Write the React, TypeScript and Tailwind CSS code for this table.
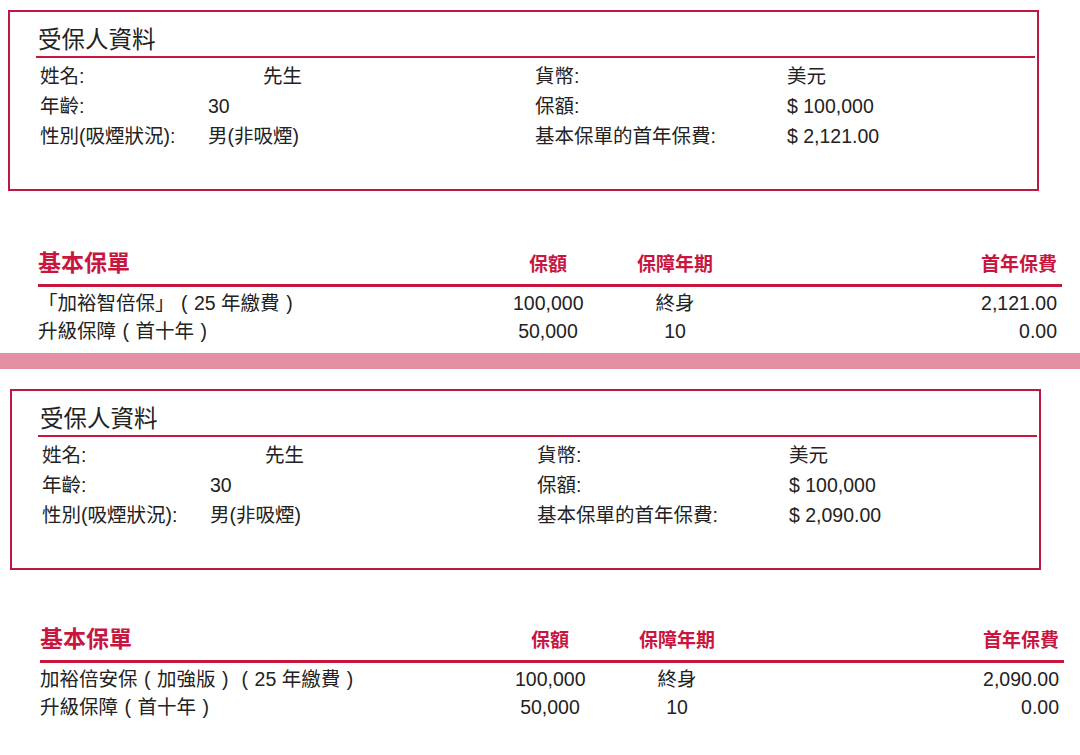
const font = { fontFamily: '"Liberation Sans", "Noto Sans CJK TC", sans-serif' }

type Row = { name: React.ReactNode; amount: string; term: string; premium: string }

// full-width bracket with the glyph centred in its box
function P({ c }: { c: string }) {
  return <span className="inline-block w-[1em] text-center">{c}</span>
}

function InsuredBox({ premium, shift }: { premium: string; shift: string }) {
  return (
    <div className={`${shift} h-[181px] w-[1031px] border-2 border-[#bd1844] pl-[26px] pr-[2px] pt-[14px]`}>
      <div className="border-b-2 border-[#c8163f] pb-[1px] pl-[2px] text-[23.5px] leading-[29px] text-[#222]">
        受保人資料
      </div>
      <div className="mt-[3px] grid grid-cols-[168px_327px_252px_1fr] pl-[4px] text-[19.5px] leading-[30px] text-[#222]">
        <div>姓名:</div>
        <div className="pl-[55px]">先生</div>
        <div>貨幣:</div>
        <div>美元</div>
        <div>年齡:</div>
        <div>30</div>
        <div>保額:</div>
        <div>$ 100,000</div>
        <div>性別(吸煙狀況):</div>
        <div>男(非吸煙)</div>
        <div>基本保單的首年保費:</div>
        <div>$ {premium}</div>
      </div>
    </div>
  )
}

function PlanTable({ rows, shift }: { rows: Row[]; shift: string }) {
  return (
    <div className={`${shift} w-[1024px]`}>
      <div className="flex items-end border-b-[3px] border-[#c8163f] pb-[6px] pr-[5px] font-bold text-[#c8163f]">
        <div className="w-[475px] text-[23px] leading-[30px]">基本保單</div>
        <div className="w-[70px] text-center text-[19px] leading-[26px]">保額</div>
        <div className="w-[184px] text-center text-[19px] leading-[26px]">保障年期</div>
        <div className="flex-1 text-right text-[19px] leading-[26px]">首年保費</div>
      </div>
      <div className="pr-[5px] pt-[2px] text-[19.5px] leading-[28px] text-[#222]">
        {rows.map((r, i) => (
          <div key={i} className="flex">
            <div className="w-[475px] whitespace-nowrap">{r.name}</div>
            <div className="w-[70px] text-center">{r.amount}</div>
            <div className="w-[184px] text-center">{r.term}</div>
            <div className="flex-1 text-right">{r.premium}</div>
          </div>
        ))}
      </div>
    </div>
  )
}

const upgrade: Row = {
  name: (
    <>
      升級保障<P c="(" />首十年<P c=")" />
    </>
  ),
  amount: "50,000",
  term: "10",
  premium: "0.00",
}

export default function App() {
  return (
    <div className="h-[755px] w-[1080px] overflow-hidden bg-white" style={font}>
      <div className="pt-[10px]">
        <InsuredBox premium="2,121.00" shift="ml-[8px]" />
      </div>
      <div className="mt-[57px]">
        <PlanTable
          shift="ml-[38px]"
          rows={[
            {
              name: (
                <>
                  「加裕智倍保」<P c="(" />25 年繳費<P c=")" />
                </>
              ),
              amount: "100,000",
              term: "終身",
              premium: "2,121.00",
            },
            upgrade,
          ]}
        />
      </div>
      <div className="mt-[8px] h-[16px] w-full bg-[#e390a5]" />
      <div className="mt-[20px]">
        <InsuredBox premium="2,090.00" shift="ml-[10px]" />
      </div>
      <div className="mt-[54px]">
        <PlanTable
          shift="ml-[40px]"
          rows={[
            {
              name: (
                <>
                  加裕倍安保<P c="(" />加強版<P c=")" />
                  <P c="(" />25 年繳費<P c=")" />
                </>
              ),
              amount: "100,000",
              term: "終身",
              premium: "2,090.00",
            },
            upgrade,
          ]}
        />
      </div>
    </div>
  )
}
